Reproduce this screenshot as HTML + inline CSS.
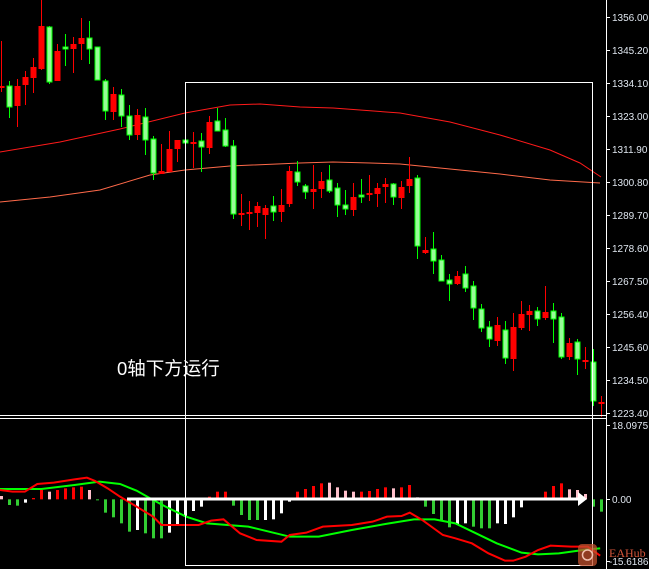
<!DOCTYPE html>
<html><head><meta charset="utf-8"><style>
html,body{margin:0;padding:0;background:#000;width:649px;height:569px;overflow:hidden}
svg{display:block}
</style></head><body>
<svg id="s" width="649" height="569" xmlns="http://www.w3.org/2000/svg" font-family="Liberation Sans, sans-serif">
<rect width="649" height="569" fill="#000"/>
<g id="ma" fill="none" stroke-width="1"></g>
<g id="c"></g>
<g id="h"></g>
<g id="sub" fill="none" stroke-width="2"></g>
<rect x="185.5" y="82.5" width="407" height="483" fill="none" stroke="#fff" stroke-width="1"/>
<line x1="0" y1="415.5" x2="606" y2="415.5" stroke="#fff"/>
<line x1="0" y1="418.5" x2="606" y2="418.5" stroke="#fff"/>
<line x1="606.5" y1="0" x2="606.5" y2="569" stroke="#fff"/>
<g id="ax" fill="#dfe6ef" font-size="10"></g>
<line x1="127" y1="499" x2="580" y2="499" stroke="#fff" stroke-width="3"/>
<polygon points="578,492 587,499 578,506" fill="#fff"/>
<rect x="578" y="544" width="19" height="22" rx="4" fill="#c0502e" opacity="0.75"/>
<circle cx="587.5" cy="555" r="5" fill="none" stroke="#f0c0b0" stroke-width="1.5"/>
<text x="609" y="557" font-size="12" fill="#d4553a" font-family="Liberation Serif, serif">EAHub</text>
<text x="117" y="375" font-size="18.5" fill="#fff" font-family="Liberation Sans, 'Noto Sans CJK SC', sans-serif">0轴下方运行</text>
</svg>
<script>
var NS="http://www.w3.org/2000/svg";
function el(p,t,a){var e=document.createElementNS(NS,t);for(var k in a)e.setAttribute(k,a[k]);document.getElementById(p).appendChild(e);return e;}
// candles: [color, bodyTop, bodyBot, high, low]
var C=[["r",86,88,41,92],["g",86,107,81,118],["r",86,106,79,127],["r",77,85,71,105],["r",67,78,58,93],["r",26,69,0,70],["g",27,82,26,84],["r",51,81,44,81],["g",47,49,34,66],["r",44,49,37,73],["r",38,44,18,60],["g",38,49,21,64],["g",47,80,47,80],["g",81,111,79,120],["r",94,112,87,120],["g",95,116,89,127],["g",116,135,105,140],["r",115,135,109,140],["g",117,140,108,155],["g",139,173,136,180],["r",171,174,144,174],["r",149,172,131,172],["r",140,149,140,162],["g",140,143,139,144],["r",142,144,132,168],["g",141,147,133,172],["r",122,148,116,154],["g",121,131,108,131],["g",130,146,118,147],["g",146,214,140,219],["r",213,215,194,226],["r",212,214,201,230],["r",206,213,202,227],["r",208,215,205,239],["g",206,212,196,221],["r",205,212,189,222],["r",171,204,166,207],["g",172,182,161,186],["g",186,192,184,199],["r",189,192,165,209],["r",181,189,172,198],["g",180,191,165,193],["g",188,205,183,217],["g",205,209,190,215],["r",197,210,183,216],["g",195,197,179,203],["r",193,195,175,201],["r",188,194,183,207],["r",184,187,178,203],["g",184,197,183,205],["r",187,198,181,209],["r",179,186,157,193],["g",178,246,175,259],["r",250,253,237,254],["g",249,261,232,274],["g",260,281,255,281],["g",280,284,274,301],["r",276,284,271,285],["g",274,288,266,292],["g",286,308,281,320],["g",309,328,304,332],["g",327,339,321,347],["r",325,341,317,346],["g",330,358,321,364],["r",327,359,313,371],["r",314,328,301,330],["r",311,315,305,331],["g",311,319,307,326],["r",312,318,286,320],["g",311,319,303,343],["g",317,357,313,359],["r",343,357,338,360],["g",342,359,339,375],["r",360,362,347,369],["g",362,401,349,406],["r",402,404,396,417]];
C.forEach(function(d,k){
 var x=1.5+8*k, g=d[0]=="g", col=g?"#00ff00":"#ff0000";
 el("c","line",{x1:x,y1:d[3],x2:x,y2:d[4],stroke:col,"stroke-width":1});
 var h=Math.max(d[2]-d[1],1.5);
 if(g) el("c","rect",{x:x-2.5,y:d[1],width:5,height:h,fill:"#98fb98",stroke:"#00ff00","stroke-width":1});
 else el("c","rect",{x:x-3,y:d[1]-(h<2?0.5:0),width:6,height:h<2?2:h,fill:"#ff0000"});
});
// MAs
function poly(p,pts,col,w){el(p,"polyline",{points:pts.map(function(q){return q.join(",")}).join(" "),stroke:col,"stroke-width":w||1,fill:"none"});}
poly("ma",[[0,152],[60,142],[120,129],[185,113],[230,105],[260,104],[300,107],[333,108],[400,113],[450,122],[500,135],[550,150],[580,163],[601,177]],"#ff1a1a");
poly("ma",[[0,202],[50,197],[100,190],[150,175],[185,170],[230,166],[300,163],[333,162],[370,163],[400,164],[450,169],[500,174],[550,180],[600,183]],"#ff6a4a");
// histogram [color, y1, y2] in zoom coords
var H=[["p",258,268],["g",268,285],["g",268,287],["w",268,278],["r",264,268],["r",240,268],["p",245,268],["r",240,268],["r",235,268],["r",232,268],["r",230,268],["p",240,268],["g",268,270],["g",268,308],["g",268,322],["g",268,340],["g",268,365],["w",268,360],["g",268,370],["g",268,385],["g",268,385],["w",268,368],["w",268,345],["w",268,320],["w",268,303],["w",268,290],["r",260,268],["r",245,268],["r",245,268],["g",268,287],["g",268,315],["g",268,330],["g",268,330],["w",268,330],["w",268,328],["w",268,310],["w",268,275],["r",245,268],["r",237,268],["r",228,268],["r",220,268],["p",218,268],["p",232,268],["p",242,268],["p",245,268],["r",245,268],["r",243,268],["r",237,268],["r",232,268],["p",235,268],["r",232,268],["r",225,268],["p",262,268],["g",268,290],["g",268,312],["g",268,330],["g",268,352],["w",268,345],["w",268,340],["g",268,350],["g",268,355],["g",268,355],["w",268,340],["w",268,342],["w",268,322],["w",268,292],null,null,["r",245,268],["r",228,268],["r",220,268],["p",238,268],["p",240,268],["p",252,268],["g",268,290],["g",268,305]];
var cm={r:"#ff0000",g:"#32cd32",w:"#ffffff",p:"#ffc0cb"};
H.forEach(function(d,k){if(!d)return;var x=1.5+8*k;var y1=410+d[1]/3,y2=410+d[2]/3;
 el("h","rect",{x:x-1.5,y:y1,width:3,height:Math.max(y2-y1,1),fill:cm[d[0]]});});
function cv(a){return a.map(function(q){return [q[0]/2.416,410+q[1]/3]});}
poly("sub",cv([[0,237],[100,237],[180,225],[240,215],[290,222],[330,242],[370,270],[400,290],[450,320],[500,340],[600,350],[700,380],[770,380],[850,360],[940,340],[1000,328],[1050,328],[1100,340],[1150,370],[1200,400],[1260,428],[1300,433],[1350,430],[1420,418],[1450,415]]),"#00ff00",2);
poly("sub",cv([[0,240],[30,245],[60,245],[90,222],[130,218],[180,208],[210,203],[230,213],[260,235],[290,260],[330,290],[370,320],[390,345],[480,345],[510,332],[540,328],[580,370],[620,390],[680,395],[700,375],[740,368],[780,350],[850,345],[900,335],[935,320],[970,318],[990,308],[1020,330],[1070,375],[1100,385],[1140,400],[1180,430],[1220,452],[1240,452],[1270,440],[1300,420],[1330,407],[1380,410],[1420,410],[1450,437]]),"#ff0000",2);
// axis labels
var L=["1356.00","1345.20","1334.10","1323.00","1311.90","1300.80","1289.70","1278.60","1267.50","1256.40","1245.60","1234.50","1223.40"];
L.forEach(function(t,i){var y=17+33*i;el("ax","line",{x1:607,y1:y+.5,x2:610,y2:y+.5,stroke:"#fff"});var e=el("ax","text",{x:612,y:y+4});e.textContent=t;});
[["18.0975",425],["0.00",499],["-15.6186",561]].forEach(function(d){el("ax","line",{x1:607,y1:d[1]+.5,x2:610,y2:d[1]+.5,stroke:"#fff"});var e=el("ax","text",{x:d[0][0]=="-"?609:612,y:d[1]+4});e.textContent=d[0];});
</script>
</body></html>
